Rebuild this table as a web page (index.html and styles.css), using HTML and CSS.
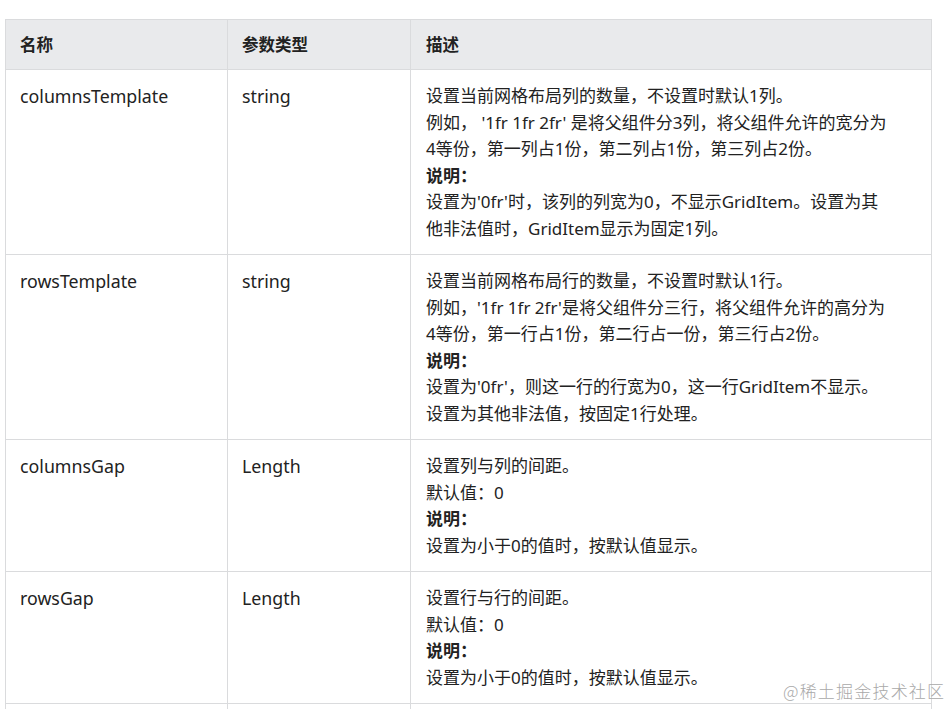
FILE: index.html
```html
<!DOCTYPE html>
<html lang="zh-CN">
<head>
<meta charset="utf-8">
<title>Grid 属性</title>
<link rel="stylesheet" href="styles.css">
</head>
<body>
<div class="page">
  <table class="attr-table">
    <colgroup>
      <col class="c-name">
      <col class="c-type">
      <col class="c-desc">
    </colgroup>
    <thead>
      <tr>
        <th>名称</th>
        <th>参数类型</th>
        <th>描述</th>
      </tr>
    </thead>
    <tbody>
      <tr>
        <td>columnsTemplate</td>
        <td>string</td>
        <td>
          <div class="ln">设置当前网格布局列的数量，不设置时默认1列。</div>
          <div class="ln">例如，&nbsp;'1fr 1fr 2fr' 是将父组件分3列，将父组件允许的宽分为</div>
          <div class="ln">4等份，第一列占1份，第二列占1份，第三列占2份。</div>
          <div class="ln note">说明：</div>
          <div class="ln">设置为'0fr'时，该列的列宽为0，不显示GridItem。设置为其</div>
          <div class="ln">他非法值时，GridItem显示为固定1列。</div>
        </td>
      </tr>
      <tr>
        <td>rowsTemplate</td>
        <td>string</td>
        <td>
          <div class="ln">设置当前网格布局行的数量，不设置时默认1行。</div>
          <div class="ln">例如，'1fr 1fr 2fr'是将父组件分三行，将父组件允许的高分为</div>
          <div class="ln">4等份，第一行占1份，第二行占一份，第三行占2份。</div>
          <div class="ln note">说明：</div>
          <div class="ln">设置为'0fr'，则这一行的行宽为0，这一行GridItem不显示。</div>
          <div class="ln">设置为其他非法值，按固定1行处理。</div>
        </td>
      </tr>
      <tr>
        <td>columnsGap</td>
        <td>Length</td>
        <td>
          <div class="ln">设置列与列的间距。</div>
          <div class="ln">默认值：0</div>
          <div class="ln note">说明：</div>
          <div class="ln">设置为小于0的值时，按默认值显示。</div>
        </td>
      </tr>
      <tr>
        <td>rowsGap</td>
        <td>Length</td>
        <td>
          <div class="ln">设置行与行的间距。</div>
          <div class="ln">默认值：0</div>
          <div class="ln note">说明：</div>
          <div class="ln">设置为小于0的值时，按默认值显示。</div>
        </td>
      </tr>
      <tr class="r-next">
        <td></td>
        <td></td>
        <td></td>
      </tr>
    </tbody>
  </table>
  <div class="watermark">@稀土掘金技术社区</div>
</div>
</body>
</html>
```

FILE: styles.css
```css
html, body {
  margin: 0;
  padding: 0;
  background: #ffffff;
  overflow: hidden;
  height: 709px;
}

.page {
  position: relative;
  height: 709px;
  overflow: hidden;
  padding: 19px 0 0 5px;
  box-sizing: border-box;
  font-family: "Noto Sans", "Noto Sans CJK SC", sans-serif;
  color: #222222;
}

.attr-table {
  border-collapse: collapse;
  table-layout: fixed;
  width: 926px;
  font-size: 17.8px;
}

.c-name { width: 222px; }
.c-type { width: 183px; }
.c-desc { width: 521px; }

.attr-table th,
.attr-table td {
  border: 1px solid #dadbdd;
  text-align: left;
  vertical-align: top;
  line-height: 26.5px;
}

.attr-table th {
  background: #e9eaec;
  font-weight: 700;
  font-size: 16.5px;
  padding: 12px 14px 11px 14px;
  height: 26px;
  line-height: 26px;
}

.attr-table td {
  padding: 13px 14px 12px 14px;
}

.attr-table td:nth-child(3),
.attr-table th:nth-child(3) {
  padding-left: 15px;
}

.r-next td {
  height: 40px;
}

.ln {
  white-space: nowrap;
  font-size: 17px;
}

.note {
  font-weight: 700;
}

.watermark {
  position: absolute;
  left: 783px;
  top: 678px;
  font-family: "Noto Sans CJK SC", sans-serif;
  font-weight: 300;
  font-size: 17px;
  color: #a9a9a9;
  letter-spacing: 1.2px;
}
```
